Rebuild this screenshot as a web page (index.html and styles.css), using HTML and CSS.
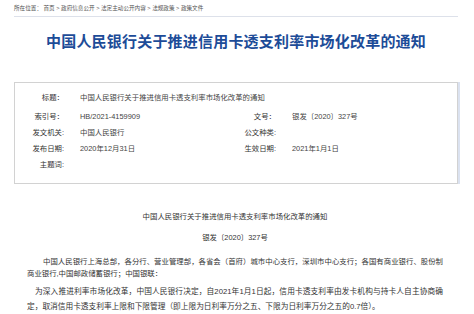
FILE: index.html
```html
<!DOCTYPE html>
<html lang="zh-CN">

<head>
    <meta charset="UTF-8">
    <meta name="viewport" content="width=device-width, initial-scale=1.0">
    <title>中国人民银行关于推进信用卡透支利率市场化改革的通知</title>
    <link rel="stylesheet" href="styles.css">
</head>

<body>
    <div class="page">
        <div class="crumb">所在位置： 首页 &gt; 政府信息公开 &gt; 法定主动公开内容 &gt; 法规政策 &gt; 政策文件</div>

        <h1 class="title">中国人民银行关于推进信用卡透支利率市场化改革的通知</h1>

        <div class="info">
            <span class="label">标题：</span>
            <span class="value wide">中国人民银行关于推进信用卡透支利率市场化改革的通知</span>

            <span class="label">索引号：</span>
            <span class="value">HB/2021-4159909</span>
            <span class="label">文号：</span>
            <span class="value">银发〔2020〕327号</span>

            <span class="label">发文机关:</span>
            <span class="value">中国人民银行</span>
            <span class="label">公文种类:</span>
            <span class="value"></span>

            <span class="label">发布日期:</span>
            <span class="value">2020年12月31日</span>
            <span class="label">生效日期:</span>
            <span class="value">2021年1月1日</span>

            <span class="label">主题词:</span>
            <span class="value"></span>
        </div>

        <div class="content">
            <p class="doc_title">中国人民银行关于推进信用卡透支利率市场化改革的通知</p>
            <p class="doc_no">银发〔2020〕327号</p>
            <p class="para">中国人民银行上海总部，各分行、营业管理部，各省会（首府）城市中心支行，深圳市中心支行；各国有商业银行、股份制商业银行,中国邮政储蓄银行；中国银联：</p>
            <p class="para para2">为深入推进利率市场化改革，中国人民银行决定，自2021年1月1日起，信用卡透支利率由发卡机构与持卡人自主协商确定，取消信用卡透支利率上限和下限管理（即上限为日利率万分之五、下限为日利率万分之五的0.7倍）。</p>
        </div>
    </div>
</body>

</html>
```

FILE: styles.css
```css
body {
    margin: 0;
    background: #fff;
    font-family: "Liberation Sans", "Noto Sans CJK SC", sans-serif;
    color: #333;
}

.page {
    width: 444px;
    margin-left: 14px;
}

.crumb {
    height: 16px;
    line-height: 16px;
    font-size: 5.6px;
    color: #555;
    border-bottom: 1px solid #dde1ea;
}

.title {
    margin: 15px 0 0;
    line-height: 20px;
    font-size: 15px;
    font-weight: 700;
    color: #1d4c98;
    text-align: center;
    letter-spacing: 0.2px;
}

.info {
    margin-top: 30px;
    border: 1px solid #d2d2d2;
    box-shadow: 2px 0 0 #dbe2f0;
    padding: 7px 0 10px;
    display: grid;
    grid-template-columns: 49px 140px 40px 1fr;
    grid-template-rows: 19px repeat(4, 16px);
    column-gap: 16px;
    font-size: 7.4px;
    line-height: 16px;
}

.info .label {
    text-align: right;
    white-space: nowrap;
    color: #333;
}

.info .value {
    color: #444;
    white-space: nowrap;
}

.info .wide {
    grid-column: 2 / 5;
}

.content {
    width: 416px;
    margin: 27px 0 0 13px;
    font-size: 7.4px;
    color: #333;
}

.content p {
    margin: 0;
}

.doc_title,
.doc_no {
    line-height: 12px;
    text-align: center;
}

.doc_no {
    margin-top: 9px !important;
}

.para {
    margin-top: 12px !important;
    line-height: 12px;
    text-indent: 16px;
    text-align: justify;
}

.para2 {
    margin-top: 4px !important;
    margin-right: -6px;
    font-size: 7.7px;
    line-height: 15px;
    text-indent: 8px;
}
```
